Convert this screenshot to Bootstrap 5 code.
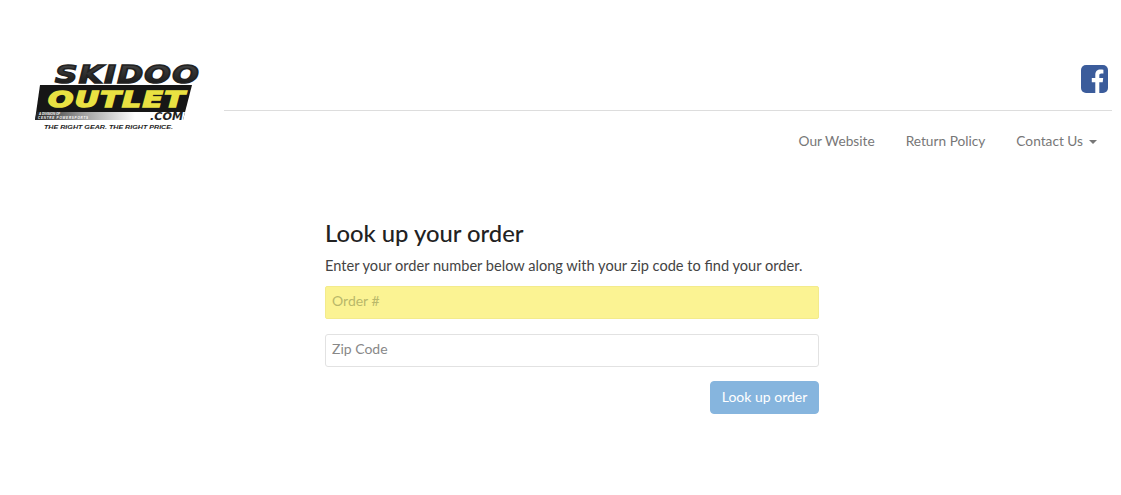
<!DOCTYPE html>
<html lang="en">
<head>
    <meta charset="UTF-8">
    <meta name="viewport" content="width=device-width, initial-scale=1.0">
    <title>Look up your order</title>
    <link rel="stylesheet" href="https://cdn.jsdelivr.net/npm/bootstrap@5.3.0/dist/css/bootstrap.min.css">
    <style>
        body {
            font-family: "Lato", "Liberation Sans", sans-serif;
            background: #fff;
            color: #333;
            overflow: hidden;
        }
        .site-head {
            padding: 55px 9px 0 35px;
        }
        .site-logo {
            width: 166px;
            height: 78px;
            flex: none;
        }
        .head-right {
            margin-left: 23px;
            padding-top: 10px;
        }
        .social-row {
            height: 46px;
            padding-right: 4px;
            border-bottom: 1px solid #ddd;
        }
        .top-links {
            margin-top: 15px;
        }
        .top-links .nav-link {
            color: #777;
            font-size: 13.7px;
            line-height: 20px;
            padding: 5px 15px 5px 16px;
        }
        .top-links .dropdown-toggle::after {
            margin-left: 6px;
            vertical-align: 2px;
            border-top-width: 4px;
            border-left-width: 4px;
            border-right-width: 4px;
        }
        .lookup-box {
            width: 494px;
            margin: 63px 0 0 325px;
        }
        .lookup-title {
            font-size: 23.8px;
            line-height: 28px;
            font-weight: 500;
            color: #222;
            margin-bottom: 9px;
        }
        .lookup-text {
            font-size: 14.6px;
            line-height: 20px;
            color: #444;
            margin-bottom: 10px;
        }
        .lookup-input {
            height: 33px;
            font-size: 14px;
            padding: 4px 6px 8px;
            border-radius: 3px;
            border-color: #e2e2e2;
            margin-bottom: 15px;
        }
        .lookup-input + .lookup-input {
            margin-bottom: 14px;
        }
        .lookup-input::placeholder {
            color: #888;
        }
        .lookup-input.is-filled {
            background: #fbf393;
            border-color: #f3eb8c;
            border-radius: 2px;
        }
        .lookup-input.is-filled::placeholder {
            color: #b9b86a;
        }
        .lookup-btn {
            width: 109px;
            height: 33px;
            font-size: 14px;
            padding: 0 0 2px;
            border-radius: 4px;
            background: #86b5de;
            border-color: #86b5de;
            color: #fff;
        }
        .logo-word {
            font-family: "DejaVu Sans", "Liberation Sans", sans-serif;
            font-weight: 700;
            font-style: italic;
        }
        .logo-small {
            font-family: "Liberation Sans", sans-serif;
            font-weight: 700;
            font-style: italic;
        }
    </style>
</head>
<body>
    <header class="site-head d-flex align-items-start">
        <svg class="site-logo" viewBox="0 -10 166 78" role="img" aria-label="Skidoo Outlet">
            <defs>
                <linearGradient id="stripFade" x1="0" x2="1" y1="0" y2="0">
                    <stop offset="0" stop-color="#222"/>
                    <stop offset="0.45" stop-color="#999"/>
                    <stop offset="1" stop-color="#fff"/>
                </linearGradient>
                <linearGradient id="skiFill" x1="0" x2="0" y1="0" y2="1">
                    <stop offset="0" stop-color="#4a4a4a"/>
                    <stop offset="1" stop-color="#111"/>
                </linearGradient>
            </defs>
            <text class="logo-word" x="20" y="17.500" font-size="24" letter-spacing="1" fill="url(#skiFill)" stroke="#222" stroke-width="1.500" textLength="145" lengthAdjust="spacingAndGlyphs">SKIDOO</text>
            <polygon points="5,20 157,20 148,55 0,55" fill="#161616"/>
            <polygon points="1.600,47 100,47 100,55 0,55" fill="url(#stripFade)"/>
            <polygon points="100,47 150,47 148,55 100,55" fill="#fff"/>
            <text class="logo-word" x="13" y="41.500" font-size="22" letter-spacing="1" fill="#e9e142" stroke="#e9e142" stroke-width="1.500" textLength="138" lengthAdjust="spacingAndGlyphs">OUTLET</text>
            <text class="logo-word" x="115" y="54.500" font-size="10" fill="#222" textLength="33" lengthAdjust="spacingAndGlyphs">.COM</text>
            <text class="logo-small" x="4" y="49.800" font-size="3" fill="#fff">A DIVISION OF</text>
            <text class="logo-small" x="3" y="53.800" font-size="3" fill="#fff" textLength="50">CENTRE POWERSPORTS</text>
            <text class="logo-small" x="9" y="64" font-size="5.400" fill="#222" textLength="129" lengthAdjust="spacingAndGlyphs">THE RIGHT GEAR.  THE RIGHT PRICE.</text>
        </svg>
        <div class="head-right flex-grow-1">
            <div class="social-row d-flex justify-content-end">
                <a href="#" aria-label="Facebook">
                    <svg class="d-block" width="27" height="28" viewBox="1 0 27 28">
                        <rect x="1" width="27" height="28" rx="5" fill="#3b5c9b"/>
                        <path d="M19.300 28V17.300h3.400l.5-4.200h-3.900v-2.600c0-1.200.4-2 2.100-2h2V4.700c-.4-.1-1.600-.2-3-.2-3 0-5.100 1.800-5.100 5.200v3.400h-3.500v4.200h3.500V28z" fill="#fff"/>
                    </svg>
                </a>
            </div>
            <ul class="nav top-links justify-content-end">
                <li class="nav-item"><a class="nav-link" href="#">Our Website</a></li>
                <li class="nav-item"><a class="nav-link" href="#">Return Policy</a></li>
                <li class="nav-item dropdown"><a class="nav-link dropdown-toggle" href="#" data-bs-toggle="dropdown">Contact Us</a></li>
            </ul>
        </div>
    </header>

    <main class="lookup-box">
        <h1 class="lookup-title">Look up your order</h1>
        <p class="lookup-text">Enter your order number below along with your zip code to find your order.</p>
        <form>
            <input class="form-control lookup-input is-filled" type="text" placeholder="Order #">
            <input class="form-control lookup-input" type="text" placeholder="Zip Code">
            <div class="d-flex justify-content-end">
                <button class="btn lookup-btn" type="button">Look up order</button>
            </div>
        </form>
    </main>

    <script src="https://cdn.jsdelivr.net/npm/bootstrap@5.3.0/dist/js/bootstrap.bundle.min.js"></script>
</body>
</html>
